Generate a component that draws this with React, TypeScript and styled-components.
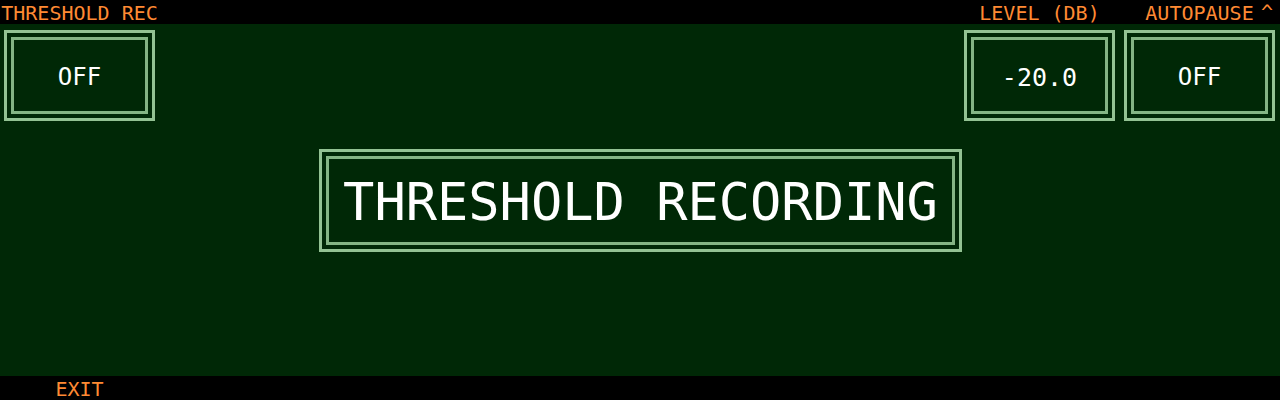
import React from "react";
import styled, { createGlobalStyle } from "styled-components";

const Global = createGlobalStyle`
  html, body { margin: 0; padding: 0; background: #000; }
  body { font-family: "DejaVu Sans Mono", "Liberation Mono", monospace; }
`;

const Screen = styled.div`
  width: 1280px;
  height: 400px;
  display: grid;
  grid-template-rows: 24px 1fr 24px;
  background: #000;
  overflow: hidden;
`;

const Bar = styled.div`
  display: grid;
  grid-template-columns: 151px 1fr 151px 151px;
  column-gap: 9px;
  padding: 0 5px 0 4px;
  background: #000;
  overflow: hidden;
`;

const Label = styled.div`
  position: relative;
  box-sizing: border-box;
  height: 24px;
  padding-top: 2px;
  color: #ff8a33;
  font-size: 20px;
  line-height: 22px;
  text-align: center;
  white-space: nowrap;
`;

const WideLabel = styled(Label)`
  margin: 0 -3px;
`;

const Caret = styled.span`
  position: absolute;
  right: 2px;
  top: 1px;
  font-size: 20px;
  line-height: 22px;
`;

const Main = styled.div`
  display: grid;
  background: #002806;
`;

const Row = styled.div`
  grid-area: 1 / 1;
  display: grid;
  grid-template-columns: 151px 1fr 151px 151px;
  column-gap: 9px;
  align-items: start;
  padding: 6px 5px 0 4px;
`;

const Frame = styled.div<{ $w: number; $h: number }>`
  box-sizing: border-box;
  width: ${(p) => p.$w}px;
  height: ${(p) => p.$h}px;
  border: 3px solid #93c293;
  padding: 4px;
  background: #002806;
`;

const FrameInner = styled.div`
  box-sizing: border-box;
  width: 100%;
  height: 100%;
  border: 3px solid #84b484;
  display: flex;
  align-items: center;
  justify-content: center;
  color: #fff;
`;

const Value = styled.span<{ $size: number }>`
  font-size: ${(p) => p.$size}px;
  line-height: 1;
  margin-top: 3px;
  white-space: nowrap;
`;

const Center = styled.div`
  grid-area: 1 / 1;
  display: flex;
  align-items: center;
  justify-content: center;
  padding-left: 1px;
`;

const App: React.FC = () => (
  <>
    <Global />
    <Screen>
      <Bar>
        <WideLabel>THRESHOLD REC</WideLabel>
        <div />
        <Label>LEVEL (DB)</Label>
        <Label>
          AUTOPAUSE
          <Caret>^</Caret>
        </Label>
      </Bar>
      <Main>
        <Row>
          <Frame $w={151} $h={91}>
            <FrameInner>
              <Value $size={24}>OFF</Value>
            </FrameInner>
          </Frame>
          <div />
          <Frame $w={151} $h={91}>
            <FrameInner>
              <Value $size={25}>-20.0</Value>
            </FrameInner>
          </Frame>
          <Frame $w={151} $h={91}>
            <FrameInner>
              <Value $size={24}>OFF</Value>
            </FrameInner>
          </Frame>
        </Row>
        <Center>
          <Frame $w={643} $h={103}>
            <FrameInner>
              <Value $size={52}>THRESHOLD RECORDING</Value>
            </FrameInner>
          </Frame>
        </Center>
      </Main>
      <Bar>
        <Label>EXIT</Label>
      </Bar>
    </Screen>
  </>
);

export default App;
